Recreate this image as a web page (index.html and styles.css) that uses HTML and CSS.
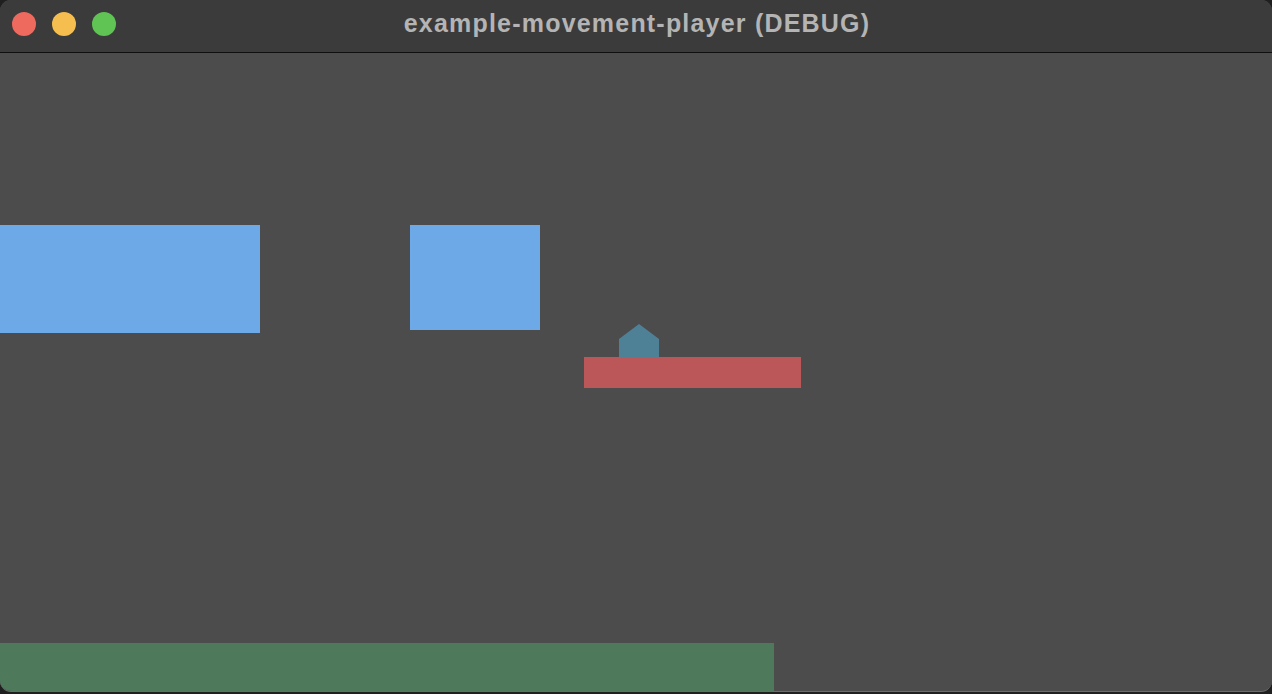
FILE: index.html
```html
<!DOCTYPE html>
<html lang="en">
<head>
<meta charset="utf-8">
<title>example-movement-player (DEBUG)</title>
<link rel="stylesheet" href="styles.css">
</head>
<body>
<div class="window">
  <header class="titlebar">
    <div class="lights">
      <span class="light close"></span>
      <span class="light minimize"></span>
      <span class="light zoom"></span>
    </div>
    <div class="title">example-movement-player (DEBUG)</div>
  </header>
  <main class="canvas">
    <div class="block block-a"></div>
    <div class="block block-b"></div>
    <div class="platform"></div>
    <svg class="player" width="40" height="33" viewBox="0 0 40 33">
      <polygon points="0,15 20,0 40,15 40,33 0,33" fill="#4f8196"/>
    </svg>
    <div class="ground"></div>
  </main>
</div>
</body>
</html>
```
FILE: styles.css
```css
html, body {
  margin: 0;
  padding: 0;
  height: 100%;
  background: #1f1f1f;
}
body {
  font-family: "Liberation Sans", Arial, sans-serif;
}
.window {
  width: 1272px;
  height: 692px;
  box-sizing: border-box;
  display: flex;
  flex-direction: column;
  border-radius: 11px;
  overflow: hidden;
  background: #4c4c4c;
  border-bottom: 1px solid #6b6b6b;
}
.titlebar {
  position: relative;
  height: 52px;
  flex: 0 0 52px;
  background: #3b3b3b;
  border-bottom: 1px solid #0f0f0f;
  display: flex;
  align-items: center;
  justify-content: center;
}
.lights {
  position: absolute;
  left: 12px;
  top: 12px;
  display: flex;
  gap: 16px;
}
.light {
  width: 24px;
  height: 24px;
  border-radius: 50%;
  display: block;
}
.close { background: #ee695e; }
.minimize { background: #f5be4f; }
.zoom { background: #60c454; }
.title {
  color: #b4b4b4;
  font-weight: bold;
  font-size: 25px;
  letter-spacing: 1.2px;
  margin-top: -5px;
  margin-left: 2px;
}
.canvas {
  position: relative;
  flex: 1;
  background: #4c4c4c;
}
.block {
  position: absolute;
  background: #6ca9e6;
}
.block-a { left: 0; top: 172px; width: 260px; height: 108px; }
.block-b { left: 410px; top: 172px; width: 130px; height: 105px; }
.platform {
  position: absolute;
  left: 584px;
  top: 304px;
  width: 217px;
  height: 31px;
  background: #bc5759;
}
.player {
  position: absolute;
  left: 619px;
  top: 271px;
  display: block;
}
.ground {
  position: absolute;
  left: 0;
  top: 590px;
  width: 774px;
  bottom: 0;
  background: #4e7a5b;
}
```
